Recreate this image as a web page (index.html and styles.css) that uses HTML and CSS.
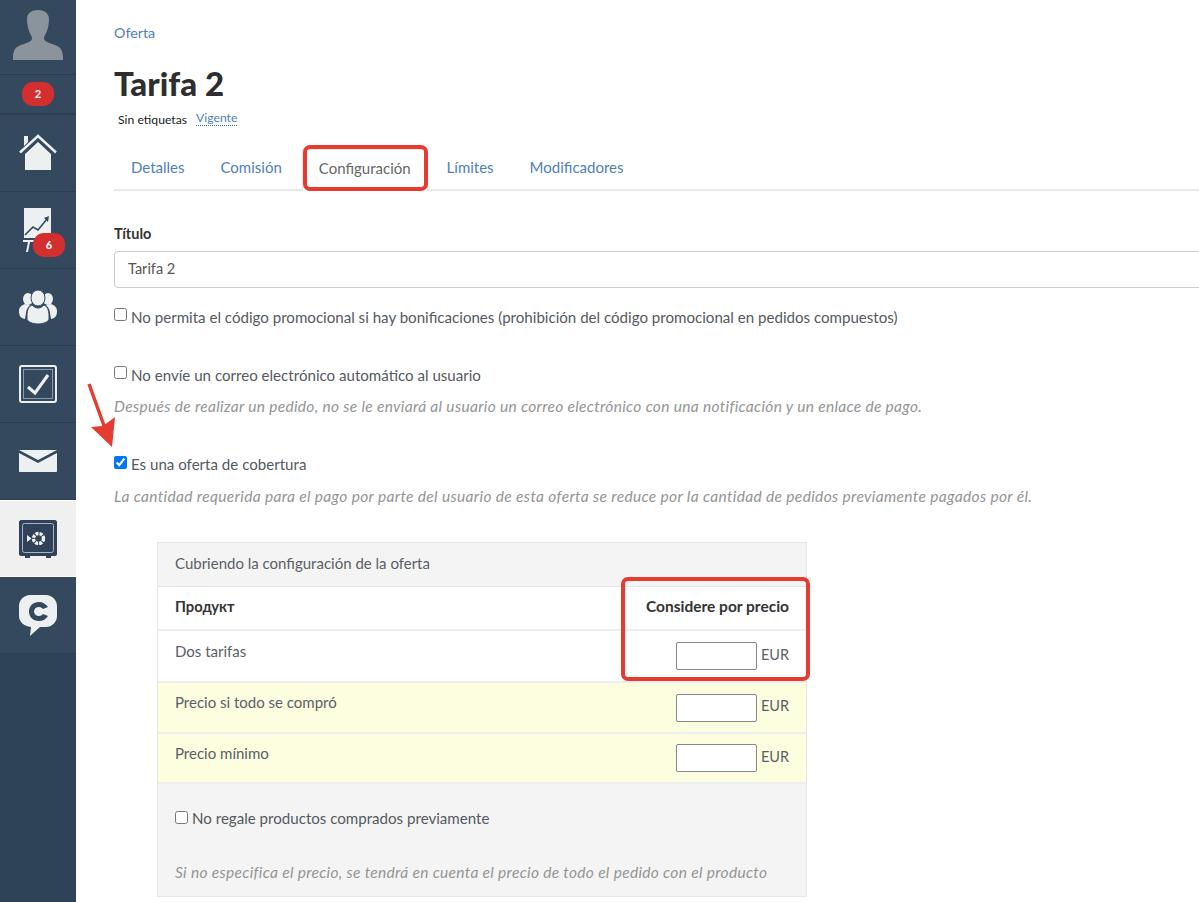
FILE: index.html
```html
<!DOCTYPE html>
<html lang="es">
<head>
<meta charset="utf-8">
<title>Tarifa 2</title>
<link rel="stylesheet" href="styles.css">
</head>
<body>
<aside class="sidebar">
  <div class="nav-item nav-avatar">
    <svg class="icon" width="50" height="50" viewBox="0 0 50 50"><path fill="#8b939c" d="M14 9c0-6 5-9 11-9s11 3 11 9c0 5-1 9-2 12-1 3-3 5-3 7 0 3 3 4 8 6 7 2 11 4 11 14v2H0v-2c0-10 4-12 11-14 5-2 8-3 8-6 0-2-2-4-3-7-1-3-2-7-2-12z"/></svg>
  </div>
  <div class="nav-item nav-count"><span class="badge">2</span></div>
  <div class="nav-item">
    <svg class="icon" width="38" height="38" viewBox="0 0 38 38"><path fill="#ecf0f1" d="M6 19 19 7l13 12v17H6z"/><path fill="#ecf0f1" d="M5 2h4v6l-4 4z"/><path fill="none" stroke="#34495e" stroke-width="2" d="M3 21.500 19 6.500l16 15"/><path fill="none" stroke="#ecf0f1" stroke-width="2.400" d="M1 18.500 19 2l18 16.500"/></svg>
  </div>
  <div class="nav-item nav-chart">
    <svg class="icon" width="30" height="44" viewBox="0 0 30 44"><path fill="#ecf0f1" d="M1 0h27v30H1z"/><path fill="none" stroke="#34495e" stroke-width="1.600" d="M2 27l8-8 5 3 9-11"/><path fill="#34495e" d="M21 10l5-2-1 6z"/><path fill="#ecf0f1" d="M0 32h12v2H7l-2 10H3l2-10H0z"/></svg>
    <span class="badge badge-over">6</span>
  </div>
  <div class="nav-item">
    <svg class="icon" width="38" height="34" viewBox="0 0 38 34"><g fill="#ecf0f1"><ellipse cx="9" cy="9" rx="5" ry="6"/><ellipse cx="29" cy="9" rx="5" ry="6"/><path d="M6 14c-3 1-6 3-6 7 0 4 1 7 6 8l1-6c0-3 2-6 4-8z"/><path d="M32 14c3 1 6 3 6 7 0 4-1 7-6 8l-1-6c0-3-2-6-4-8z"/><ellipse cx="19" cy="8" rx="7" ry="8" stroke="#34495e"/><path stroke="#34495e" d="M13 15c-3 1-5 5-5 10v5c3 3 7 4 11 4s8-1 11-4v-5c0-5-2-9-5-10-2 2-4 3-6 3s-4-1-6-3z"/></g></svg>
  </div>
  <div class="nav-item">
    <svg class="icon" width="38" height="38" viewBox="0 0 38 38"><rect x="1" y="1" width="36" height="36" rx="2" fill="none" stroke="#ecf0f1" stroke-width="2"/><rect x="4.500" y="4.500" width="29" height="29" fill="none" stroke="#8d99a6" stroke-width="1"/><path fill="none" stroke="#ecf0f1" stroke-width="3" d="M9 22l7 6 13-18"/></svg>
  </div>
  <div class="nav-item">
    <svg class="icon" width="38" height="22" viewBox="0 0 38 22"><path fill="#ecf0f1" d="M0 0l19 10L38 0z"/><path fill="#ecf0f1" d="M0 3v18c0 .6.4 1 1 1h36c.6 0 1-.4 1-1V3L19 13z"/></svg>
  </div>
  <div class="nav-item nav-active">
    <svg class="icon" width="38" height="38" viewBox="0 0 38 38"><path fill="#2f4259" d="M2 0h34c1 0 2 1 2 2v32c0 1-1 2-2 2h-4v2h-5v-2H11v2H6v-2H2c-1 0-2-1-2-2V2C0 1 1 0 2 0z"/><rect x="3.500" y="3.500" width="31" height="29" rx="2" fill="none" stroke="#aab4bf" stroke-width="1"/><circle cx="19.500" cy="18.500" r="5" fill="none" stroke="#f0f0f0" stroke-width="3.400" stroke-dasharray="3 1"/><path fill="#f0f0f0" d="M8 15l4.500 3.500L8 22z"/></svg>
  </div>
  <div class="nav-item">
    <svg class="icon" width="38" height="41" viewBox="0 0 38 41"><path fill="#ecf0f1" fill-rule="evenodd" d="M11 0h16c6 0 11 5 11 11v10c0 6-5 11-11 11h-6l-10 9 1-9c-7-1-12-5-12-11V11C0 5 5 0 11 0zm9 7c-6 0-10 4-10 9.500S14 26 20 26c4 0 7-2 9-5l-5-2c-1 1-2 2-4 2-3 0-5-2-5-4.500s2-4.500 5-4.500c2 0 3 1 4 2l5-2c-2-3-5-5-9-5z"/></svg>
  </div>
</aside>

<main class="main">
  <a class="crumb">Oferta</a>
  <h1 class="title">Tarifa 2</h1>
  <div class="tags"><span class="tag-none">Sin etiquetas</span><a class="tag-state">Vigente</a></div>

  <nav class="tabs">
    <a class="tab">Detalles</a>
    <a class="tab">Comisión</a>
    <a class="tab tab-active">Configuración</a>
    <a class="tab">Límites</a>
    <a class="tab">Modificadores</a>
  </nav>

  <form class="form">
    <label class="field-label" for="title">Título</label>
    <input class="text-input" id="title" type="text" value="Tarifa 2">

    <label class="check check-first"><input type="checkbox">No permita el código promocional si hay bonificaciones (prohibición del código promocional en pedidos compuestos)</label>

    <label class="check check-second"><input type="checkbox">No envíe un correo electrónico automático al usuario</label>
    <p class="hint hint-second">Después de realizar un pedido, no se le enviará al usuario un correo electrónico con una notificación y un enlace de pago.</p>

    <label class="check check-third"><input type="checkbox" checked>Es una oferta de cobertura</label>
    <p class="hint hint-third">La cantidad requerida para el pago por parte del usuario de esta oferta se reduce por la cantidad de pedidos previamente pagados por él.</p>

    <section class="panel">
      <div class="panel-head">Cubriendo la configuración de la oferta</div>
      <div class="row row-head"><span class="row-bold">Продукт</span><span class="row-bold row-price-head">Considere por precio</span></div>
      <div class="row row-first"><span class="row-name">Dos tarifas</span><span class="price"><input class="price-input" type="text"><span class="unit">EUR</span></span></div>
      <div class="row row-yellow"><span class="row-name">Precio si todo se compró</span><span class="price"><input class="price-input" type="text"><span class="unit">EUR</span></span></div>
      <div class="row row-yellow row-last"><span class="row-name">Precio mínimo</span><span class="price"><input class="price-input" type="text"><span class="unit">EUR</span></span></div>
      <div class="panel-foot">
        <label class="check check-foot"><input type="checkbox">No regale productos comprados previamente</label>
        <p class="hint hint-foot">Si no especifica el precio, se tendrá en cuenta el precio de todo el pedido con el producto</p>
      </div>
    </section>
  </form>

  <div class="mark mark-tab"></div>
  <div class="mark mark-price"></div>
  <svg class="arrow" width="34" height="70" viewBox="0 0 34 70"><path fill="none" stroke="#e53b30" stroke-width="3.400" d="M3 2l18 50"/><path fill="#e53b30" d="M26 65 5 45l12-1 12-9z"/></svg>
</main>
</body>
</html>
```

FILE: styles.css
```css
* { box-sizing: border-box; }
html, body { margin: 0; height: 100%; }
body {
  display: flex;
  height: 902px;
  overflow: hidden;
  background: #fff;
  color: #5a5f66;
  font-family: "Lato", "Liberation Sans", sans-serif;
  font-size: 15.100px;
}
.sidebar {
  flex: 0 0 76px;
  width: 76px;
  background: #2f4358;
  display: flex;
  flex-direction: column;
}
.nav-item {
  position: relative;
  flex: 0 0 77px;
  height: 77px;
  background: #34495e;
  border-bottom: 1px solid #2c3e50;
  display: flex;
  align-items: center;
  justify-content: center;
}
.nav-avatar { flex-basis: 75px; height: 75px; align-items: flex-end; padding-bottom: 14px; }
.nav-count { flex-basis: 40px; height: 40px; border-bottom-width: 2px; }
.nav-chart { align-items: flex-start; padding-top: 16px; }
.nav-active { background: #f0f0f0; border-bottom: 1px solid #fff; border-top: 1px solid #fff; }
.icon { display: block; }
.badge {
  display: block;
  width: 32px;
  height: 24px;
  border-radius: 11px;
  background: #d32f2f;
  color: #fff;
  font-size: 11px;
  font-weight: 700;
  line-height: 24px;
  text-align: center;
}
.badge-over { position: absolute; left: 33px; top: 41px; }

.main { position: relative; flex: 1; min-width: 0; padding-left: 38px; }
a { color: #4f7fb8; text-decoration: none; }
.crumb { display: block; margin-top: 24px; height: 18px; line-height: 18px; font-size: 14.300px; }
.title { margin: 14px 0 0; height: 54px; line-height: 54px; font-size: 33px; font-weight: 900; color: #2e2e2e; }
.tags { display: flex; align-items: center; height: 20px; margin-top: -1px; padding-left: 4px; font-size: 12.200px; }
.tag-none { color: #222; margin-right: 9px; }
.tag-state { border-bottom: 1px dotted #2a6ab0; position: relative; top: -1px; }
.tabs { display: flex; height: 42px; margin-top: 20px; border-bottom: 2px solid #e8e8e8; font-size: 15px; width: 1085px; }
.tab { padding: 0 18px 0 17px; line-height: 36px; margin-right: 1px; }
.tab-active { color: #666; background: #fff; border: 1px solid #e8e8e8; border-bottom: 0; height: 42px; padding: 0 16px; margin-right: 2px; margin-left: 1px; }

.form { display: block; }
.field-label { display: block; margin-top: 34px; height: 18px; line-height: 18px; font-weight: 700; color: #333; font-size: 14.500px; }
.text-input {
  display: block;
  width: 1100px;
  height: 37px;
  margin-top: 8px;
  padding: 0 13px 3px;
  border: 1px solid #ccc;
  border-radius: 4px;
  color: #555;
  font: inherit;
  font-size: 14.500px;
}
.check { display: flex; align-items: center; height: 20px; color: #55595f; }
.check input { width: 13px; height: 13px; margin: 0 4px 6px 0; }
.check-first { margin-top: 19px; }
.check-second { margin-top: 38px; }
.check-third { margin-top: 38px; }
.check-third input { margin-bottom: 4px; }
.hint { margin: 0; font-style: italic; color: #949494; line-height: 20px; font-size: 15.500px; letter-spacing: .32px; }
.hint-second { margin-top: 11px; }
.hint-third { margin-top: 12px; letter-spacing: .35px; }

.panel { width: 650px; margin: 36px 0 0 43px; border: 1px solid #e5e5e5; background: #f4f4f4; }
.panel-head { height: 44px; padding: 0 17px; line-height: 40px; font-size: 15px; border-bottom: 1px solid #e5e5e5; }
.row { display: flex; justify-content: space-between; padding: 0 17px; background: #fff; border-bottom: 2px solid #eee; height: 51px; }
.row-head { height: 44px; align-items: center; padding-bottom: 4px; }
.row-first { height: 52px; }
.row-first .row-name { padding-top: 11px; }
.row-bold { font-weight: 700; color: #333; font-size: 14.700px; }
.row-price-head { font-size: 15.500px; }
.row-yellow { background: #fdfde0; }
.row-last { height: 50px; }
.row-name { padding-top: 10px; font-size: 15px; }
.price { display: flex; align-items: center; gap: 4px; font-size: 14.500px; }
.unit { padding-bottom: 4px; }
.price-input { width: 81px; height: 28px; border: 1px solid #888; border-radius: 2px; background: #fff; }
.panel-foot { padding: 0 17px; height: 112px; }
.check-foot { padding-top: 24px; height: 44px; }
.check-foot input { margin-bottom: 2px; }
.hint-foot { margin-top: 34px; }

.mark { position: absolute; border: 4px solid #e53b30; border-radius: 7px; }
.mark-tab { left: 227px; top: 145px; width: 125px; height: 46px; }
.mark-price { left: 545px; top: 577px; width: 189px; height: 104px; }
.arrow { position: absolute; left: 10px; top: 382px; }
```
